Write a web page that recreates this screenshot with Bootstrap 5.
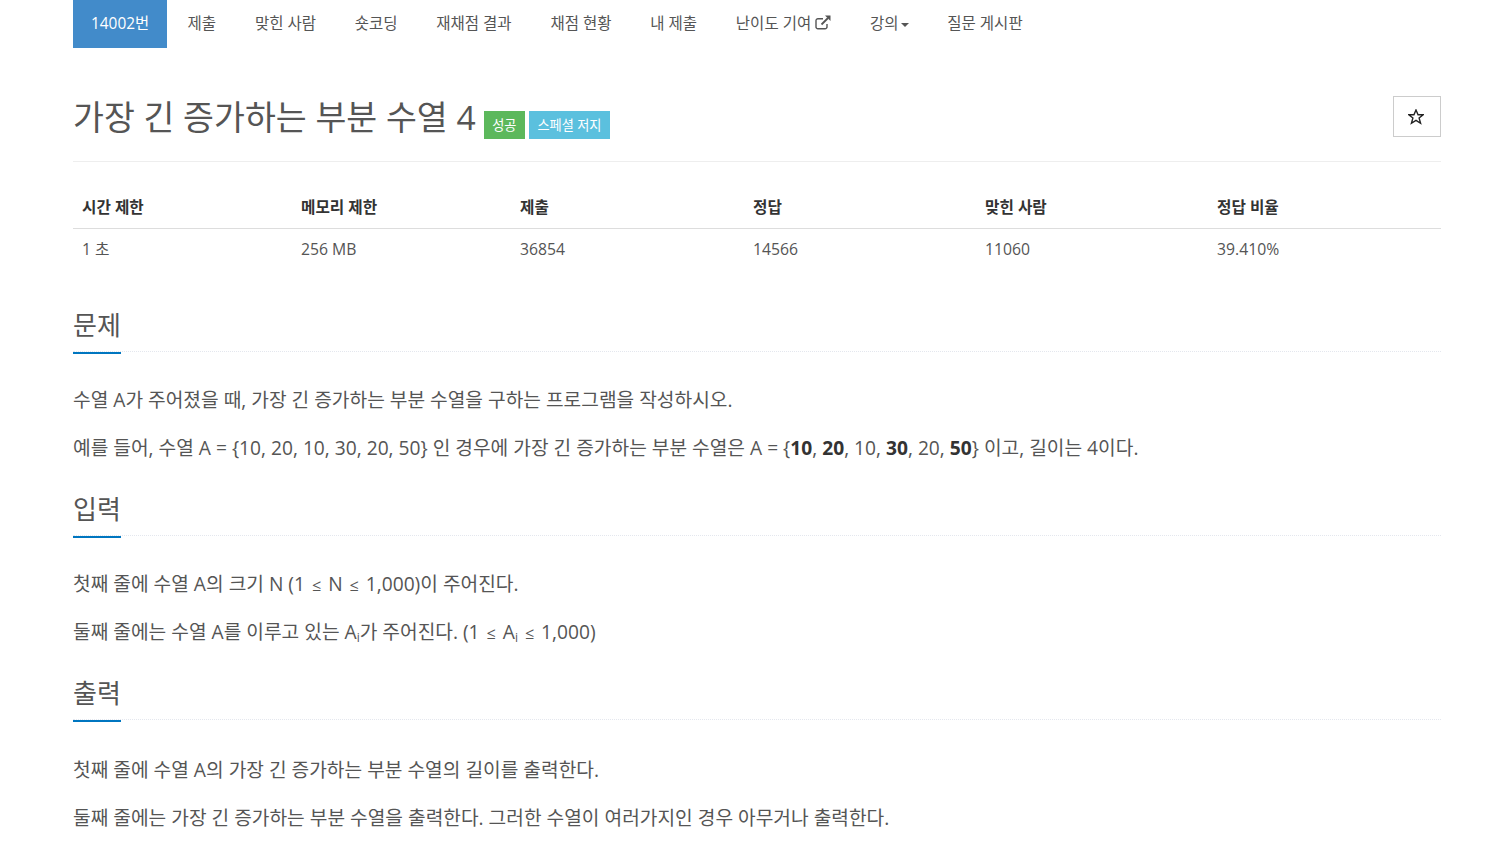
<!DOCTYPE html>
<html lang="ko">
<head>
  <meta charset="UTF-8">
  <title>가장 긴 증가하는 부분 수열 4</title>
  <link href="https://cdn.jsdelivr.net/npm/bootstrap@5.3.0/dist/css/bootstrap.min.css" rel="stylesheet">
  <style>
    body { font-family: "Open Sans", "Noto Sans CJK KR", sans-serif; color: #555; font-size: 18px; background: #fff; }
    .page-wrap { padding: 0 50px 0 73px; }
    .tab-bar .nav-link { color: #555; font-size: 15.5px; padding: 0 19.4px; height: 48px; line-height: 46px; }
    .tab-bar .nav-link.active-tab { background: #428bca; color: #fff; font-size: 15.4px; line-height: 47px; padding: 0 18px; margin-right: 1px; }
    .tab-icon { vertical-align: -1px; }
    .tab-arrow { display: inline-block; width: 0; height: 0; margin-left: 2px; border-top: 4px solid #555; border-left: 4px solid transparent; border-right: 4px solid transparent; vertical-align: middle; }
    .title-row { margin-top: 48px; border-bottom: 1px solid #eee; height: 66px; }
    .title-text { font-size: 33.6px; font-weight: 400; line-height: 42px; color: #555; margin: 0; }
    .tag-green, .tag-blue { display: inline-block; color: #fff; font-size: 13.2px; line-height: 28px; height: 28px; padding: 0 8.5px; font-weight: 400; margin-left: 4px; }
    .tag-green { background: #5cb85c; margin-left: 8px; }
    .tag-blue { background: #5bc0de; }
    .star-btn { width: 48px; height: 41px; border: 1px solid #ccc; border-radius: 0; background: #fff; display: flex; align-items: center; justify-content: center; padding: 0 2px 0 0; }
    .info-table { table-layout: fixed; width: 100%; margin: 24px 0 0; font-size: 15.75px; color: #555; }
    .info-table th { font-size: 15.7px; font-weight: 700; padding: 10px 9px 8px; height: 42px; border-bottom: 1px solid #ddd; color: #333; }
    .info-table td { padding: 9px; height: 40px; color: #555; border: 0; }
    .sec-head { border-bottom: 1px dotted #e4e7ee; height: 53px; }
    .sec-head.sec-first { margin-top: 29px; }
    .sec-head h2 { font-size: 26px; font-weight: 400; line-height: 48px; margin: 0; color: #555; height: 55px; padding-top: 2px; border-bottom: 2px solid #0076c0; width: 48px; white-space: nowrap; }
    .sec-body { padding-top: 33.5px; }
    .sec-body p { font-size: 19.2px; line-height: 28.8px; margin: 0 0 19.8px; color: #555; white-space: nowrap; }
    .sec-body.sec-b2 { padding-top: 34.5px; }
    .sec-body.sec-b3 { padding-top: 35.5px; }
    .sec-body.sec-b2 p, .sec-body.sec-b3 p { margin-bottom: 19px; }
    .sec-body.sec-b2 p:last-child { margin-bottom: 20.4px; }
    .sec-body b { color: #333; }
    .math-op { margin: 0 7px; font-size: 16px; line-height: 1; }
    sub { font-size: 12px; }
  </style>
</head>
<body>
<div class="page-wrap">
  <ul class="nav tab-bar">
    <li class="nav-item"><a class="nav-link active-tab" href="#">14002번</a></li>
    <li class="nav-item"><a class="nav-link" href="#">제출</a></li>
    <li class="nav-item"><a class="nav-link" href="#">맞힌 사람</a></li>
    <li class="nav-item"><a class="nav-link" href="#">숏코딩</a></li>
    <li class="nav-item"><a class="nav-link" href="#">재채점 결과</a></li>
    <li class="nav-item"><a class="nav-link" href="#">채점 현황</a></li>
    <li class="nav-item"><a class="nav-link" href="#">내 제출</a></li>
    <li class="nav-item"><a class="nav-link" href="#">난이도 기여
      <svg class="tab-icon" width="16" height="15" viewBox="0 0 16 15"><path d="M12 9v2.500A2 2 0 0 1 10 13.800H3A2 2 0 0 1 1 11.500V6a2 2 0 0 1 2-2.300H8" fill="none" stroke="#555" stroke-width="1.400"/><path d="M6.500 9.500 13 3" fill="none" stroke="#555" stroke-width="1.800"/><path d="M10 .5h5.500V6z" fill="#555"/></svg></a></li>
    <li class="nav-item"><a class="nav-link" href="#">강의<span class="tab-arrow"></span></a></li>
    <li class="nav-item"><a class="nav-link" href="#">질문 게시판</a></li>
  </ul>

  <div class="title-row d-flex justify-content-between align-items-start">
    <h1 class="title-text">가장 긴 증가하는 부분 수열 4<span class="tag-green">성공</span><span class="tag-blue">스페셜 저지</span></h1>
    <button class="star-btn" type="button" aria-label="즐겨찾기">
      <svg width="16" height="16" viewBox="1 1 14 14" fill="none" stroke="#222" stroke-width="1.200"><path d="M8 1.800 9.800 6h4.500l-3.600 2.900 1.300 4.600L8 10.900l-4 2.600 1.300-4.600L1.700 6h4.500z"/></svg>
    </button>
  </div>

  <table class="info-table">
    <colgroup><col style="width:219px"><col style="width:219px"><col style="width:233px"><col style="width:232px"><col style="width:232px"><col></colgroup>
    <thead>
      <tr><th>시간 제한</th><th>메모리 제한</th><th>제출</th><th>정답</th><th>맞힌 사람</th><th>정답 비율</th></tr>
    </thead>
    <tbody>
      <tr><td>1 초</td><td>256 MB</td><td>36854</td><td>14566</td><td>11060</td><td>39.410%</td></tr>
    </tbody>
  </table>

  <div class="sec-head sec-first"><h2>문제</h2></div>
  <div class="sec-body">
    <p>수열 A가 주어졌을 때, 가장 긴 증가하는 부분 수열을 구하는 프로그램을 작성하시오.</p>
    <p>예를 들어, 수열 A = {10, 20, 10, 30, 20, 50} 인 경우에 가장 긴 증가하는 부분 수열은 A = {<b>10</b>, <b>20</b>, 10, <b>30</b>, 20, <b>50</b>} 이고, 길이는 4이다.</p>
  </div>

  <div class="sec-head"><h2>입력</h2></div>
  <div class="sec-body sec-b2">
    <p>첫째 줄에 수열 A의 크기 N (1<span class="math-op">≤</span>N<span class="math-op">≤</span>1,000)이 주어진다.</p>
    <p>둘째 줄에는 수열 A를 이루고 있는 A<sub>i</sub>가 주어진다. (1<span class="math-op">≤</span>A<sub>i</sub><span class="math-op">≤</span>1,000)</p>
  </div>

  <div class="sec-head"><h2>출력</h2></div>
  <div class="sec-body sec-b3">
    <p>첫째 줄에 수열 A의 가장 긴 증가하는 부분 수열의 길이를 출력한다.</p>
    <p>둘째 줄에는 가장 긴 증가하는 부분 수열을 출력한다. 그러한 수열이 여러가지인 경우 아무거나 출력한다.</p>
  </div>
</div>
<script src="https://cdn.jsdelivr.net/npm/bootstrap@5.3.0/dist/js/bootstrap.bundle.min.js"></script>
</body>
</html>
